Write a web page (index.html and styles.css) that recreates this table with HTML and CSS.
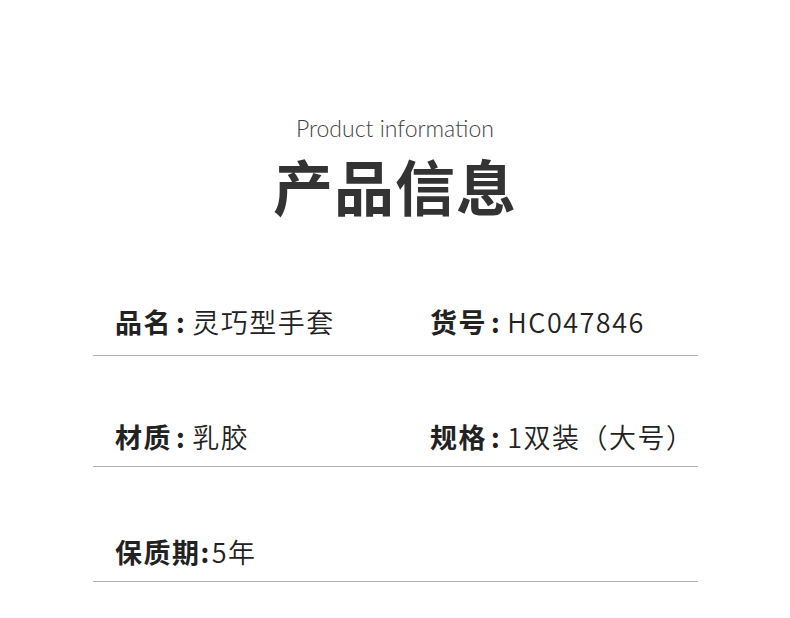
FILE: index.html
```
<!doctype html>
<html lang="zh">
  <head>
    <meta charset="utf-8">
    <title>产品信息</title>
    <link rel="stylesheet" href="styles.css">
  </head>
  <body>
    <header class="heading">
      <p class="sub">Product information</p>
      <h1>产品信息</h1>
    </header>

    <div class="table">
      <div class="row first">
        <div class="cell"><b>品名</b><b class="colon">:</b>灵巧型手套</div>
        <div class="cell right"><b>货号</b><b class="colon">:</b>HC047846</div>
      </div>
      <div class="row">
        <div class="cell"><b>材质</b><b class="colon">:</b>乳胶</div>
        <div class="cell right"><b>规格</b><b class="colon">:</b>1双装（大号）</div>
      </div>
      <div class="row last">
        <div class="cell"><b>保质期</b><b class="colon tight">:</b>5年</div>
      </div>
    </div>
  </body>
</html>
```

FILE: styles.css
```
html {
    font-family: "Noto Sans CJK SC", "Noto Sans", sans-serif;
    color: #222;
    background-color: #fff;
}

body { margin: 0; }

.heading {
    text-align: center;
    padding-top: 117px;
}

.sub {
    margin: 0;
    font-family: "Lato", "Noto Sans", sans-serif;
    font-weight: 300;
    font-size: 23px;
    line-height: 22px;
    color: #444;
}

h1 {
    margin: 3px 0 0;
    font-size: 60px;
    line-height: 86px;
    font-weight: 700;
    color: #333;
    letter-spacing: 1px;
}

.table {
    width: 605px;
    margin: 13px 0 0 93px;
}

.row {
    display: grid;
    grid-template-columns: 315px 1fr;
    padding: 63px 0 11px 22px;
    border-bottom: 1px solid #b0b0b0;
}

.row.first { padding-bottom: 15px; }
.row.last { padding-top: 67px; }

.cell {
    font-size: 27px;
    line-height: 36px;
    letter-spacing: 1.5px;
    font-weight: 350;
    color: #222;
}

.cell b {
    font-weight: 700;
}

.colon {
    margin: 0 6px 0 4px;
}

.colon.tight {
    margin: 0 1px 0 0;
}
```
